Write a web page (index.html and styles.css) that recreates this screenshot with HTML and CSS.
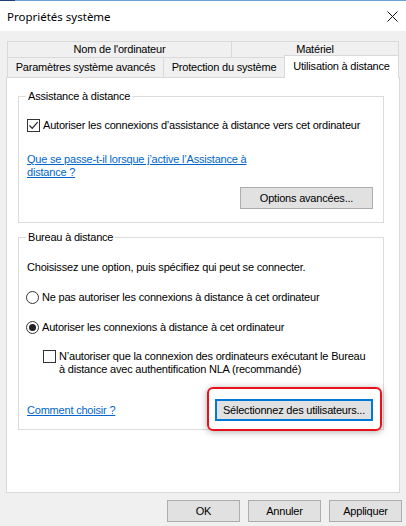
FILE: index.html
```html
<!DOCTYPE html>
<html lang="fr">
<head>
<meta charset="utf-8">
<title>Propriétés système</title>
<link rel="stylesheet" href="styles.css">
</head>
<body>
<div class="topline"></div>
<div class="titlebar">
  <span class="title">Propriétés système</span>
  <svg class="close" width="11" height="11" viewBox="0 0 11 11"><path d="M0.5 0.5 L10.5 10.5 M10.5 0.5 L0.5 10.5" stroke="#111" stroke-width="1" fill="none"/></svg>
</div>
<div class="main">
  <div class="tabs">
    <div class="tabrow row1">
      <div class="tab t-nom">Nom de l'ordinateur</div>
      <div class="tab t-mat">Matériel</div>
    </div>
    <div class="tabrow row2">
      <div class="tab t-par">Paramètres système avancés</div>
      <div class="tab t-pro">Protection du système</div>
      <div class="tab t-uti selected">Utilisation à distance</div>
    </div>
  </div>
  <div class="panel">
    <fieldset class="group g1">
      <legend>Assistance à distance</legend>
      <div class="opt-row first">
        <span class="checkbox"><svg width="11" height="11" viewBox="0 0 11 11"><path d="M1.5 5.5 L4.2 8.3 L9.6 2.2" stroke="#222" stroke-width="1.2" fill="none"/></svg></span>
        <span class="label">Autoriser les connexions d’assistance à distance vers cet ordinateur</span>
      </div>
      <a class="link help" href="#">Que se passe-t-il lorsque j’active l’Assistance à<br>distance ?</a>
      <div class="btn-row">
        <div class="button btn-options">Options avancées...</div>
      </div>
    </fieldset>
    <fieldset class="group g2">
      <legend>Bureau à distance</legend>
      <div class="intro">Choisissez une option, puis spécifiez qui peut se connecter.</div>
      <div class="opt-row radio-row">
        <span class="radio"></span>
        <span class="label">Ne pas autoriser les connexions à distance à cet ordinateur</span>
      </div>
      <div class="opt-row radio-row">
        <span class="radio on"><span class="dot"></span></span>
        <span class="label">Autoriser les connexions à distance à cet ordinateur</span>
      </div>
      <div class="nla">
        <span class="checkbox"></span>
        <span class="label">N’autoriser que la connexion des ordinateurs exécutant le Bureau<br>à distance avec authentification NLA (recommandé)</span>
      </div>
      <div class="bottom-row">
        <a class="link" href="#">Comment choisir ?</a>
        <div class="highlight-wrap">
          <div class="button btn-select">Sélectionnez des utilisateurs...</div>
          <div class="highlight"></div>
        </div>
      </div>
    </fieldset>
  </div>
</div>
<div class="footer">
  <div class="button fbtn">OK</div>
  <div class="button fbtn">Annuler</div>
  <div class="button fbtn">Appliquer</div>
</div>
</body>
</html>
```
FILE: styles.css
```css
* { box-sizing: border-box; }
html, body { margin: 0; padding: 0; }
body {
  width: 406px;
  height: 526px;
  overflow: hidden;
  background: #f0f0f0;
  font-family: "Liberation Sans", Arial, sans-serif;
  font-size: 11px;
  line-height: 13px;
  letter-spacing: -0.2px;
  color: #000;
}
.topline {
  height: 1px;
  background: linear-gradient(to right, #1f3f6e 0, #1f3f6e 15px, #6fa3d8 15px);
}
.titlebar {
  height: 30px;
  background: #fff;
  display: flex;
  align-items: center;
  justify-content: space-between;
  padding: 1px 8px 0 7px;
}
.title {
  font-family: "Noto Sans", "Liberation Sans", sans-serif;
  font-size: 11.5px;
  letter-spacing: 0;
  color: #000;
}
.close { display: block; }
.main { padding: 10px 6px 0 6px; }
.tabs { margin-left: 1px; width: 392px; }
.tabrow { display: flex; }
.tab {
  border: 1px solid #d9d9d9;
  background: #f0f0f0;
  text-align: center;
  white-space: nowrap;
}
.tab + .tab { margin-left: -1px; }
.row1 .tab { height: 17px; line-height: 15px; }
.t-nom { width: 225px; }
.t-mat { width: 168px; }
.row2 { margin-top: -1px; height: 20px; align-items: flex-end; }
.row2 .tab { height: 20px; border-bottom: none; padding-top: 3px; }
.t-par { width: 157px; }
.t-pro { width: 122px; }
.t-uti { width: 115px; }
.row2 .tab.selected {
  height: 23px;
  margin-bottom: -1px;
  padding-top: 4px;
  background: #fff;
  position: relative;
  z-index: 2;
}
.panel {
  width: 394px;
  height: 416px;
  border: 1px solid #d9d9d9;
  background: #fff;
  padding: 12px 0 0 11px;
}
.group {
  width: 366px;
  margin: 0;
  border: 1px solid #dcdcdc;
  padding: 0 10px 13px 8px;
  min-width: 0;
}
.group legend {
  padding: 0 2px;
  margin-left: -1px;
  line-height: 13px;
}
.g2 { margin-top: 8px; padding-bottom: 8px; }
.label { white-space: nowrap; }
.opt-row {
  display: flex;
  align-items: center;
  gap: 3px;
  height: 13px;
}
.opt-row.first { margin-top: 16px; }
.checkbox {
  width: 13px;
  height: 13px;
  flex: none;
  border: 1px solid #333;
  background: #fff;
  display: flex;
  align-items: center;
  justify-content: center;
}
.checkbox svg { display: block; }
.link {
  color: #0066cc;
  text-decoration: underline;
}
.help { display: block; margin-top: 21px; }
.btn-row {
  display: flex;
  justify-content: flex-end;
  margin-top: 8px;
}
.button {
  height: 22px;
  background: #e1e1e1;
  border: 1px solid #adadad;
  display: flex;
  align-items: center;
  justify-content: center;
  white-space: nowrap;
}
.btn-options { width: 133px; }
.intro { margin-top: 17px; white-space: nowrap; }
.radio-row { margin-top: 17px; margin-left: -1px; }
.radio {
  width: 13px;
  height: 13px;
  flex: none;
  border: 1px solid #333;
  border-radius: 50%;
  background: #fff;
  display: flex;
  align-items: center;
  justify-content: center;
}
.radio .dot {
  width: 7px;
  height: 7px;
  border-radius: 50%;
  background: #222;
}
.nla {
  display: flex;
  align-items: flex-start;
  gap: 3px;
  margin-top: 16px;
  padding-left: 16px;
}
.bottom-row {
  display: flex;
  justify-content: space-between;
  align-items: center;
  margin-top: 23px;
}
.highlight-wrap { position: relative; }
.btn-select {
  width: 158px;
  border: 2px solid #0078d7;
}
.highlight {
  position: absolute;
  left: -8px;
  right: -9px;
  top: -12px;
  bottom: -10px;
  border: 2px solid #e8101c;
  border-radius: 6px;
  box-shadow: 0 1px 7px rgba(0, 0, 0, 0.32);
  pointer-events: none;
}
.footer {
  display: flex;
  justify-content: flex-end;
  gap: 8px;
  margin-top: 7px;
  padding-right: 4px;
}
.fbtn { width: 73px; }
```
